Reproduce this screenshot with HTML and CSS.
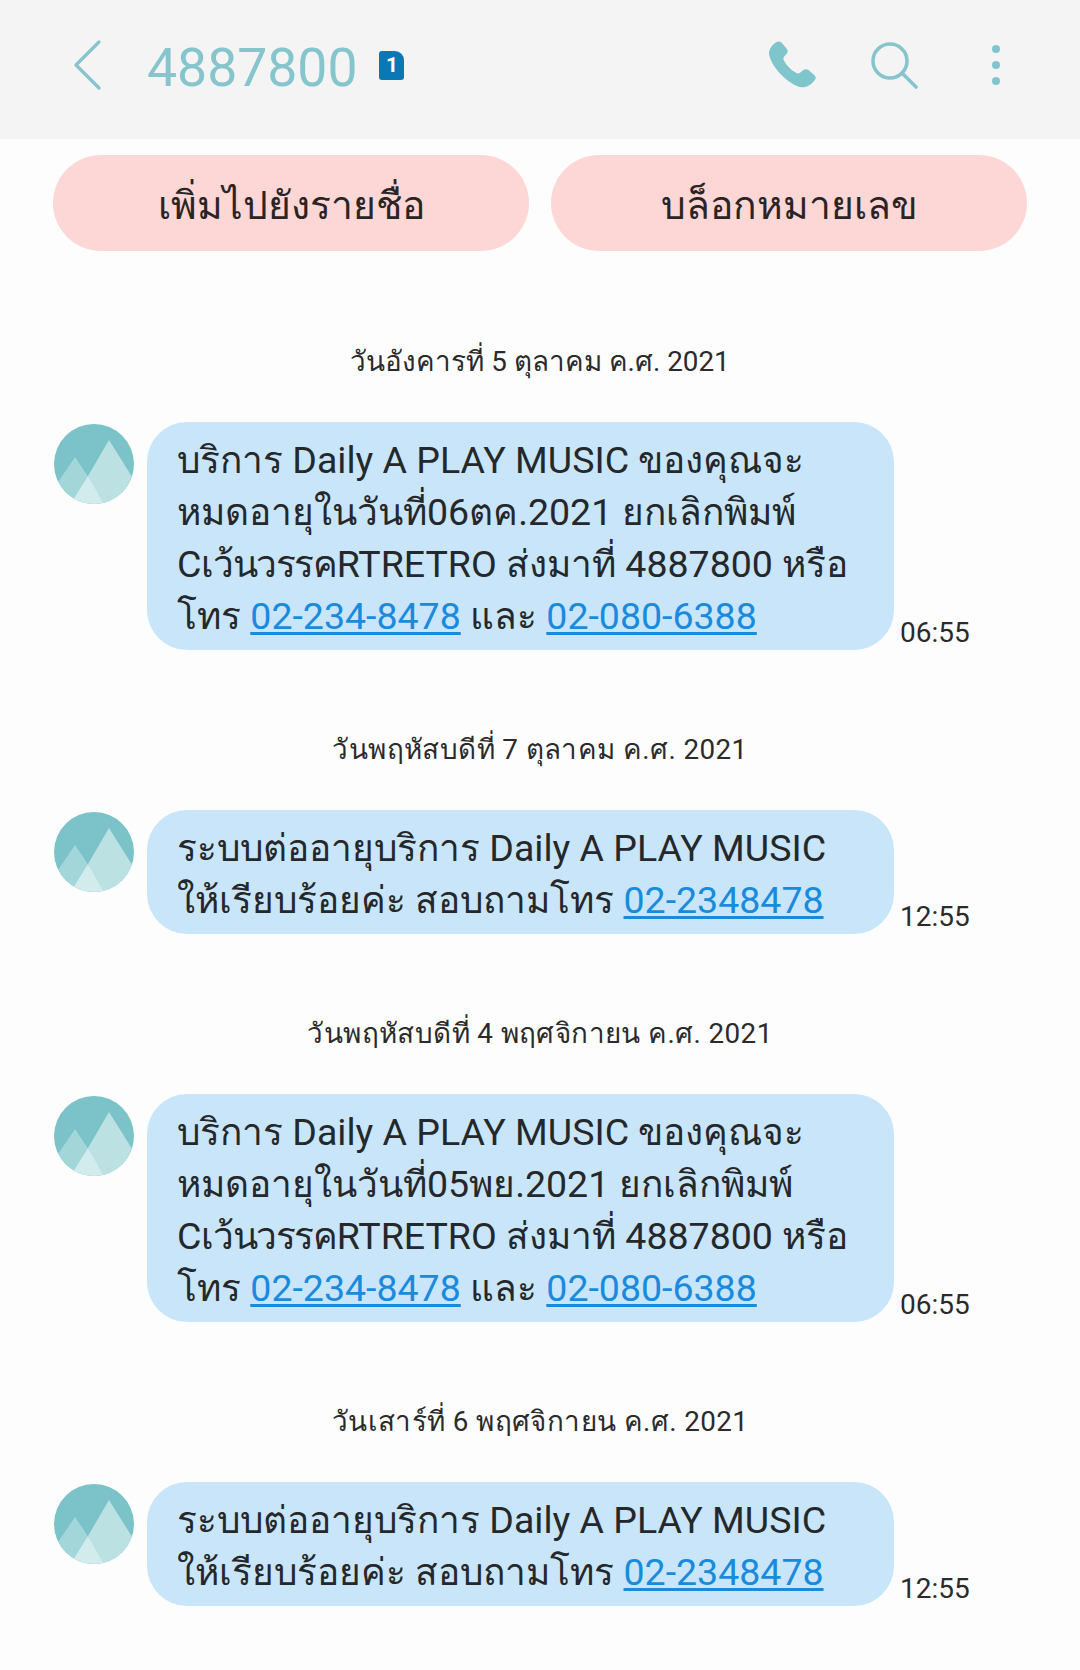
FILE: index.html
```html
<!DOCTYPE html>
<html lang="th">
<head>
<meta charset="utf-8">
<title>4887800</title>
<link rel="stylesheet" href="styles.css">
</head>
<body>
<header class="bar">
  <svg class="back" width="32" height="52" viewBox="0 0 32 52"><path d="M27 3 L4 26 L27 49" fill="none" stroke="#86c5cc" stroke-width="3.2" stroke-linecap="round" stroke-linejoin="round"/></svg>
  <span class="number">4887800</span>
  <span class="sim">1</span>
  <span class="spacer"></span>
  <svg class="ic-phone" width="48" height="48" viewBox="0 0 48 48"><path d="M5 3C7 .5 10.500-.2 12.500 1.500L17.500 7.500C19.200 9.500 19 11.500 17.500 13L15.500 15C14 16.500 14.200 18.500 15.300 20.300C18 25 22 29 27 31.800C28.800 32.800 30.500 32.600 32 31L34 29.300C35.800 27.800 38 27.800 39.800 29.200L45.500 34.200C47 35.600 47 37.500 45.800 39C42.500 43.500 38 46.500 33 46.300C27 46 18 40 11 32.500C4.500 25.500 0 17 0 12C0 8.500 2.500 5 5 3Z" fill="#7fc5cc"/></svg>
  <svg class="ic-search" width="48" height="48" viewBox="0 0 48 48"><circle cx="19" cy="20" r="17" fill="none" stroke="#86c5cc" stroke-width="3.600"/><path d="M31 32 L45 46" fill="none" stroke="#86c5cc" stroke-width="3.600" stroke-linecap="round"/></svg>
  <span class="dots"><i></i><i></i><i></i></span>
</header>

<div class="actions">
  <button class="pill">เพิ่มไปยังรายชื่อ</button>
  <button class="pill">บล็อกหมายเลข</button>
</div>

<main class="thread">
  <section class="day">
    <h2 class="date">วันอังคารที่ 5 ตุลาคม ค.ศ. 2021</h2>
    <div class="msg">
      <svg class="avatar" viewBox="0 0 80 80"><use href="#mtn"/></svg>
      <p class="bubble"><span class="th">บริการ</span> Daily A PLAY MUSIC <span class="th">ของคุณจะ</span><br><span class="th">หมดอายุในวันที่</span>06<span class="th">ตค.</span>2021 <span class="th">ยกเลิกพิมพ์</span><br>C<span class="th tight">เว้นวรรค</span>RTRETRO <span class="th">ส่งมาที่</span> 4887800 <span class="th">หรือ</span><br><span class="th">โทร</span> <a href="#">02-234-8478</a> <span class="th">และ</span> <a href="#">02-080-6388</a></p>
      <time class="time">06:55</time>
    </div>
  </section>
  <section class="day">
    <h2 class="date date-wide">วันพฤหัสบดีที่ 7 ตุลาคม ค.ศ. 2021</h2>
    <div class="msg">
      <svg class="avatar" viewBox="0 0 80 80"><use href="#mtn"/></svg>
      <p class="bubble"><span class="th">ระบบต่ออายุบริการ</span> Daily A PLAY MUSIC<br><span class="th">ให้เรียบร้อยค่ะ สอบถามโทร</span> <a href="#">02-2348478</a></p>
      <time class="time">12:55</time>
    </div>
  </section>
  <section class="day">
    <h2 class="date date-wide">วันพฤหัสบดีที่ 4 พฤศจิกายน ค.ศ. 2021</h2>
    <div class="msg">
      <svg class="avatar" viewBox="0 0 80 80"><use href="#mtn"/></svg>
      <p class="bubble"><span class="th">บริการ</span> Daily A PLAY MUSIC <span class="th">ของคุณจะ</span><br><span class="th">หมดอายุในวันที่</span>05<span class="th">พย.</span>2021 <span class="th">ยกเลิกพิมพ์</span><br>C<span class="th tight">เว้นวรรค</span>RTRETRO <span class="th">ส่งมาที่</span> 4887800 <span class="th">หรือ</span><br><span class="th">โทร</span> <a href="#">02-234-8478</a> <span class="th">และ</span> <a href="#">02-080-6388</a></p>
      <time class="time">06:55</time>
    </div>
  </section>
  <section class="day">
    <h2 class="date date-wide">วันเสาร์ที่ 6 พฤศจิกายน ค.ศ. 2021</h2>
    <div class="msg">
      <svg class="avatar" viewBox="0 0 80 80"><use href="#mtn"/></svg>
      <p class="bubble"><span class="th">ระบบต่ออายุบริการ</span> Daily A PLAY MUSIC<br><span class="th">ให้เรียบร้อยค่ะ สอบถามโทร</span> <a href="#">02-2348478</a></p>
      <time class="time">12:55</time>
    </div>
  </section>
</main>

<svg class="defs" width="0" height="0">
  <defs>
    <clipPath id="round"><circle cx="40" cy="40" r="40"/></clipPath>
    <g id="mtn" clip-path="url(#round)">
      <rect width="80" height="80" fill="#7cc2c9"/>
      <path d="M0 64 L21 33 L55 84 L20 84 Z" fill="#a3d6d9"/>
      <path d="M55 16 L90 72 L80 84 L50 84 L34 52 Z" fill="#bbe1e3"/>
      <path d="M34 52 L19 76 L24 84 L52 84 Z" fill="#d2ebec"/>
    </g>
  </defs>
</svg>
</body>
</html>
```

FILE: styles.css
```css
* { box-sizing: border-box; }
html, body { margin: 0; padding: 0; }
body {
  width: 1080px;
  height: 1670px;
  overflow: hidden;
  background: #fdfdfd;
  color: #25282b;
  font-family: Roboto, "Noto Sans", "Liberation Sans", sans-serif;
}
.bar {
  height: 139px;
  background: #f4f4f4;
  display: flex;
  align-items: center;
  padding: 0 0 9px 72px;
}
.back { flex: none; }
.number {
  margin-left: 43px;
  padding-top: 6px;
  font-size: 53.5px;
  line-height: 60px;
  color: #86c5cc;
}
.sim {
  margin-left: 22px;
  width: 25px;
  height: 29px;
  background: #0a78b4;
  color: #fff;
  font-size: 21px;
  font-weight: 700;
  line-height: 29px;
  text-align: center;
  border-radius: 3px 9px 3px 3px;
}
.spacer { flex: 1; }
.ic-phone { flex: none; margin-right: 54px; }
.ic-search { flex: none; margin-right: 73px; }
.dots { display: flex; flex-direction: column; gap: 8px; margin-right: 80px; }
.dots i { display: block; width: 8px; height: 8px; border-radius: 50%; background: #7fc5cc; }

.actions {
  display: flex;
  gap: 22px;
  padding: 16px 53px 0;
}
.pill {
  flex: 1;
  height: 96px;
  border: 0;
  border-radius: 48px;
  background: #fdd6d6;
  color: #2a2425;
  font-family: inherit;
  font-size: 39px;
  padding: 4px 0 0;
}
.thread { padding-top: 92px; }
.day { margin-bottom: 81px; }
.date {
  margin: 0 0 41px;
  font-size: 27.8px;
  font-weight: 400;
  line-height: 38px;
  text-align: center;
  color: #2b2b2b;
}
.date-wide { letter-spacing: .4px; }
.msg {
  display: flex;
  align-items: flex-start;
  padding-left: 54px;
}
.avatar { width: 80px; height: 80px; flex: none; margin-top: 2px; }
.bubble {
  width: 747px;
  margin: 0 0 0 13px;
  padding: 12px 30px 8px;
  background: #c9e5fa;
  border-radius: 40px;
  font-size: 37.5px;
  line-height: 52px;
  white-space: nowrap;
}
.th { font-size: 37px; line-height: 0; }
.tight { letter-spacing: -1.4px; }
.bubble a { color: #1a8bdc; text-decoration: underline; text-underline-offset: 3px; }
.time {
  align-self: flex-end;
  margin: 0 0 0 6px;
  font-size: 28px;
  line-height: 34px;
  color: #2b2b2b;
}
.defs { position: absolute; }
```
